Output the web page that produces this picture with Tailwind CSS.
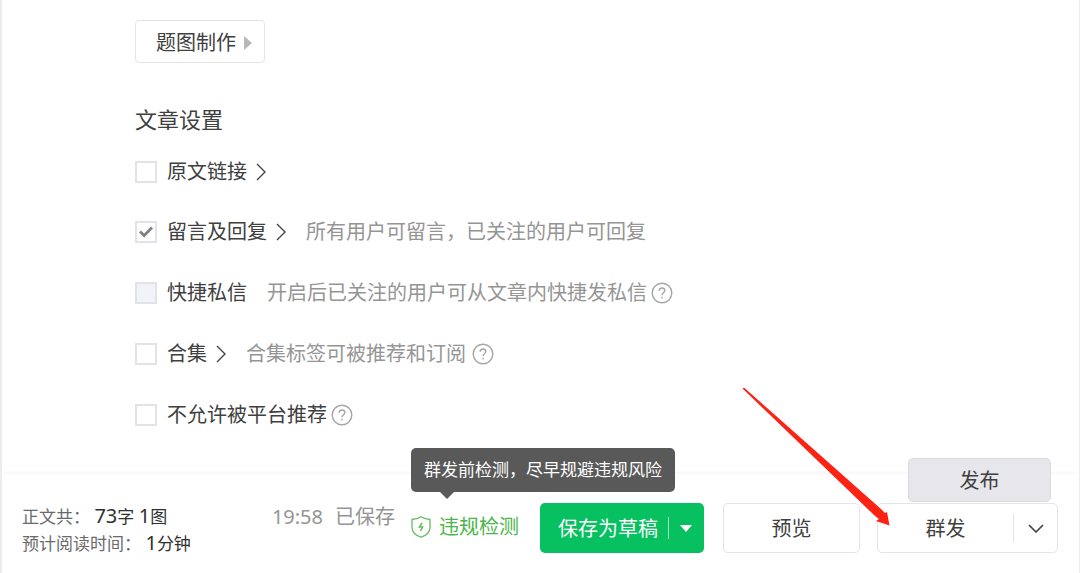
<!DOCTYPE html>
<html lang="zh-CN">
<head>
<meta charset="utf-8">
<meta name="viewport" content="width=device-width, initial-scale=1">
<title>文章设置</title>
<script src="https://cdn.jsdelivr.net/npm/@tailwindcss/browser@4"></script>
</head>
<body class="relative flex min-h-screen flex-col border-l-2 border-r border-[#ececec] bg-white font-['Noto_Sans','Noto_Sans_CJK_SC',sans-serif] text-xl leading-6 text-[#404040]">

<main class="flex-1 pt-5 pb-11 pl-[133px]">
  <button type="button" class="flex h-[43px] items-center gap-2 rounded border border-[#e4e4e7] pt-[2px] pr-3 pl-5">
    题图制作
    <svg class="h-[14px] w-2" viewBox="0 0 8 14" fill="#b8b8b8" aria-hidden="true"><path d="M0 0L8 7L0 14Z"/></svg>
  </button>

  <h2 class="mt-[42px] text-[22px] leading-7">文章设置</h2>

  <div class="mt-[27px] mb-9 flex h-6 items-center">
    <input id="source" type="checkbox" class="mr-[10px] size-[22px] appearance-none border-2 border-[#e2e2e8]">
    <label for="source">原文链接</label>
    <svg class="ml-[9px] h-[18px] w-[10px]" viewBox="0 0 10 18" fill="none" stroke="#454545" stroke-width="1.4" aria-hidden="true"><path d="M1 1L9 9L1 17"/></svg>
  </div>

  <div class="flex flex-col gap-[37px]">
    <div class="flex h-6 items-center">
      <span class="relative mr-[10px] flex size-[22px]">
        <input id="comment" type="checkbox" checked class="size-[22px] appearance-none border-2 border-[#e2e2e8]">
        <svg class="pointer-events-none absolute top-[5px] left-1 h-3 w-[14px]" viewBox="0 0 14 12" fill="none" stroke="#808080" stroke-width="2.8" aria-hidden="true"><path d="M1 5.6L5.2 9.6L13 1.6"/></svg>
      </span>
      <label for="comment">留言及回复</label>
      <svg class="ml-[9px] h-[18px] w-[10px]" viewBox="0 0 10 18" fill="none" stroke="#454545" stroke-width="1.4" aria-hidden="true"><path d="M1 1L9 9L1 17"/></svg>
      <span class="ml-5 text-[#959595]">所有用户可留言，已关注的用户可回复</span>
    </div>
    <div class="flex h-6 items-center">
      <input id="message" type="checkbox" disabled class="mr-[10px] size-[22px] appearance-none border-2 border-[#e2e2e8] bg-[#f2f3f8]">
      <label for="message">快捷私信</label>
      <span class="ml-5 text-[#959595]">开启后已关注的用户可从文章内快捷发私信</span>
      <svg class="ml-1 size-[22px]" viewBox="0 0 22 22" fill="none" stroke="#a6a6a6" stroke-width="1.4" aria-hidden="true"><circle cx="11" cy="11" r="9.8"/><path d="M8.2 8.8C8.2 7 9.3 6 11 6S13.8 7 13.8 8.6C13.8 10.6 11 10.8 11 13.2M11 14.8V16.4"/></svg>
    </div>
    <div class="flex h-6 items-center">
      <input id="album" type="checkbox" class="mr-[10px] size-[22px] appearance-none border-2 border-[#e2e2e8]">
      <label for="album">合集</label>
      <svg class="ml-[9px] h-[18px] w-[10px]" viewBox="0 0 10 18" fill="none" stroke="#454545" stroke-width="1.4" aria-hidden="true"><path d="M1 1L9 9L1 17"/></svg>
      <span class="ml-5 text-[#959595]">合集标签可被推荐和订阅</span>
      <svg class="ml-[6px] size-[22px]" viewBox="0 0 22 22" fill="none" stroke="#a6a6a6" stroke-width="1.4" aria-hidden="true"><circle cx="11" cy="11" r="9.8"/><path d="M8.2 8.8C8.2 7 9.3 6 11 6S13.8 7 13.8 8.6C13.8 10.6 11 10.8 11 13.2M11 14.8V16.4"/></svg>
    </div>
    <div class="flex h-6 items-center">
      <input id="norec" type="checkbox" class="mr-[10px] size-[22px] appearance-none border-2 border-[#e2e2e8]">
      <label for="norec">不允许被平台推荐</label>
      <svg class="ml-1 size-[22px]" viewBox="0 0 22 22" fill="none" stroke="#a6a6a6" stroke-width="1.4" aria-hidden="true"><circle cx="11" cy="11" r="9.8"/><path d="M8.2 8.8C8.2 7 9.3 6 11 6S13.8 7 13.8 8.6C13.8 10.6 11 10.8 11 13.2M11 14.8V16.4"/></svg>
    </div>
  </div>
</main>

<footer class="flex items-start bg-white pt-[29px] pr-[21px] pb-4 pl-5 whitespace-nowrap shadow-[0_-1px_4px_rgba(0,0,0,0.05)]">
  <div class="text-[17px] leading-[26px] text-[#6a6a6a]">
    <p>正文共： <span class="text-[#303030]"><span class="text-xl leading-[26px]">73</span>字 <span class="text-xl leading-[26px]">1</span>图</span></p>
    <p>预计阅读时间： <span class="text-[#303030]"><span class="text-xl leading-[26px]">1</span>分钟</span></p>
  </div>
  <p class="ml-auto flex gap-3 leading-7 text-[#959595]"><span>19:58</span><span>已保存</span></p>
  <div class="relative ml-4">
    <button type="button" class="flex h-12 items-center gap-2 text-[#4ab54a]">
      <svg class="h-[22px] w-5" viewBox="0 0 20 22" fill="none" stroke="#62bf62" stroke-width="1.3" aria-hidden="true"><path d="M10 .8C7 2.8 4 3.4 1 3.5V11C1 16 4.4 19.4 10 21.2C15.6 19.4 19 16 19 11V3.5C16 3.4 13 2.8 10 .8Z"/><path d="M11 7L8.500 11H11.500L9.500 15" stroke-width="1.6"/></svg>
      违规检测
    </button>
    <div role="tooltip" class="absolute bottom-[59px] left-0 rounded-[5px] bg-[#595959] px-[13px] py-[10px] text-[17px] leading-6 text-white">
      群发前检测，尽早规避违规风险
      <svg class="absolute top-full left-[29px] h-[7px] w-[14px]" viewBox="0 0 14 7" fill="#595959" aria-hidden="true"><path d="M0 0H14L7 7Z"/></svg>
    </div>
  </div>
  <div class="ml-[21px] flex h-[50px] rounded-[5px] bg-[#07c160] text-white">
    <button type="button" class="w-32 pt-px pl-2">保存为草稿</button>
    <button type="button" aria-label="更多保存选项" class="flex w-9 items-center">
      <span class="h-[22px] w-px bg-white/60"></span>
      <svg class="ml-[11px] h-[7px] w-3" viewBox="0 0 12 7" fill="#fff" aria-hidden="true"><path d="M0 0H12L6 7Z"/></svg>
    </button>
  </div>
  <button type="button" class="ml-[19px] h-[50px] w-[137px] rounded-[5px] border border-[#e4e4e7] pt-px">预览</button>
  <div class="relative ml-[17px] flex h-[50px] w-[181px] items-center rounded-[5px] border border-[#e4e4e7]">
    <button type="button" class="h-full flex-1 pt-px">群发</button>
    <button type="button" aria-label="更多发布方式" class="flex h-7 w-11 items-center justify-center border-l border-[#e4e4e7]">
      <svg class="h-[9px] w-4" viewBox="0 0 16 9" fill="none" stroke="#404040" stroke-width="1.6" aria-hidden="true"><path d="M1 1L8 8L15 1"/></svg>
    </button>
    <button type="button" class="absolute right-[6px] bottom-[50px] h-11 w-[143px] rounded-[5px] border border-[#d9d9de] bg-[#e6e6eb] pt-px">发布</button>
    <!-- Pointer towards the mass-send button -->
    <svg class="pointer-events-none absolute bottom-[26px] -left-[135px] h-[138px] w-[147px]" viewBox="0 0 147 138" fill="#fa2314" aria-hidden="true"><path d="M0 0L1.500 0L138 121L142 125L144 124L146.500 137.500L133 133L136 131L131 127L0 1Z"/></svg>
  </div>
</footer>
</body>
</html>
